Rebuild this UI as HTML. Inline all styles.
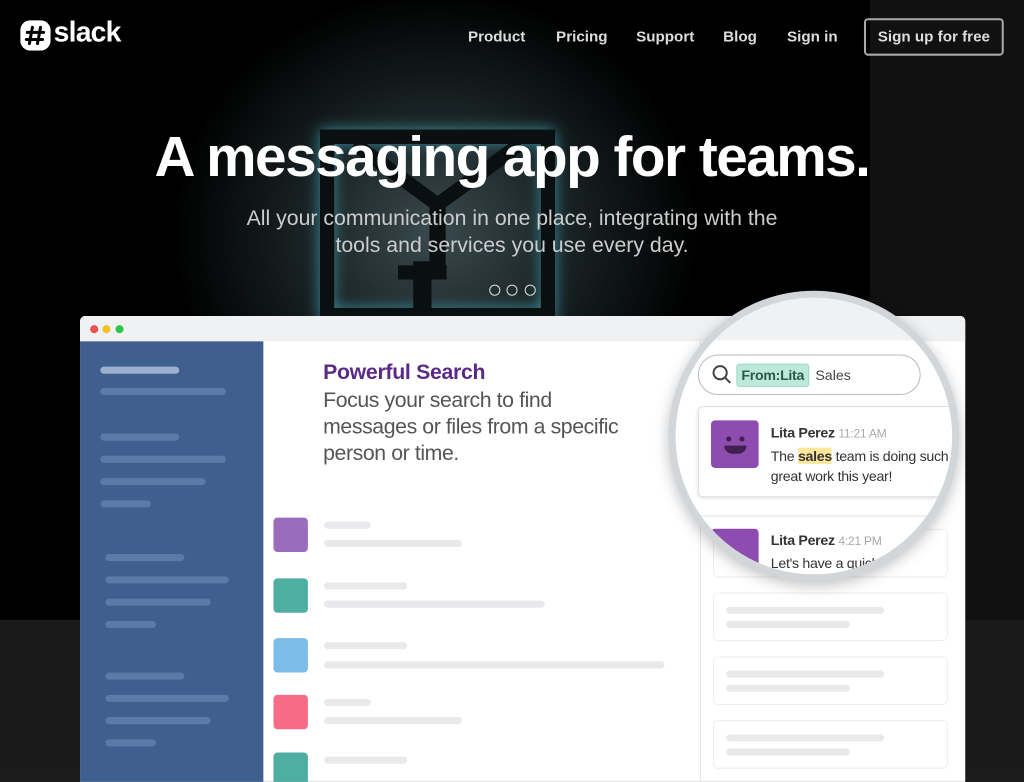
<!DOCTYPE html>
<html><head><meta charset="utf-8"><style>
*{margin:0;padding:0;box-sizing:border-box}
html,body{width:1024px;height:768px;overflow:hidden;background:#1b1b1b;font-family:"Liberation Sans",sans-serif}
#s{position:absolute;left:0;top:0;width:1011px;height:758px;transform:scale(1.01286);transform-origin:0 0}
.a{position:absolute}
.bar{position:absolute;height:7px;border-radius:4px}
.sb{background:#5a7aa8}
.gb{background:#e8e9eb}
</style></head><body><div id="s">
<div class="a" style="left:0;top:0;width:859px;height:612px;background:radial-gradient(ellipse 260px 240px at 430px 230px,#3a4a4e 0%,#1c2628 45%,#000 100%)"></div>
<div class="a" style="left:859px;top:0;width:152px;height:612px;background:#111"></div>
<div class="a" style="left:0;top:612px;width:1011px;height:146px;background:#1a1a1a"></div>
<!-- glowing logo -->
<div class="a" style="left:316px;top:128px;width:232px;height:190px;border:14px solid #0a0f10;box-shadow:0 0 14px #3a8a9a,inset 0 0 14px #3a8a9a"></div>
<svg class="a" style="left:330px;top:142px" width="204" height="130" viewBox="0 0 204 130"><path d="M20 0 L102 60 L184 0" fill="none" stroke="#0a0f10" stroke-width="14"/><path d="M102 60 V130" stroke="#0a0f10" stroke-width="16"/></svg>
<div class="a" style="left:408px;top:258px;width:18px;height:60px;background:#0a0f10"></div>
<div class="a" style="left:393px;top:262px;width:48px;height:14px;background:#0a0f10"></div>
<!-- logo -->
<svg class="a" style="left:20px;top:20px" width="30" height="30" viewBox="0 0 30 30"><rect x="0" y="0" width="30" height="30" rx="10" fill="#fff"/><g stroke="#000" stroke-width="3" stroke-linecap="round"><path d="M12 7l-3 16M20 7l-3 16M7 12h16M6 19h16"/></g></svg>
<div class="a" style="left:53px;top:16px;color:#fff;font-size:28px;font-weight:bold;letter-spacing:-0.8px">slack</div>
<div class="a" style="top:28px;left:462px;color:#ddd;font-size:15px;font-weight:bold">Product</div>
<div class="a" style="top:28px;left:549px;color:#ddd;font-size:15px;font-weight:bold">Pricing</div>
<div class="a" style="top:28px;left:628px;color:#ddd;font-size:15px;font-weight:bold">Support</div>
<div class="a" style="top:28px;left:714px;color:#ddd;font-size:15px;font-weight:bold">Blog</div>
<div class="a" style="top:28px;left:777px;color:#ddd;font-size:15px;font-weight:bold">Sign in</div>
<div class="a" style="top:18px;left:853px;width:138px;height:37px;border:2px solid #aaa;border-radius:4px;color:#ddd;font-size:15px;font-weight:bold;text-align:center;line-height:33px">Sign up for free</div>
<div class="a" style="left:0;width:1011px;top:122px;text-align:center;color:#fff;font-size:56px;font-weight:bold;letter-spacing:-1.5px">A messaging app for teams.</div>
<div class="a" style="left:0;width:1011px;top:202px;text-align:center;color:#ccc;font-size:21px;line-height:27px">All your communication in one place, integrating with the<br>tools and services you use every day.</div>
<div class="a" style="left:483px;top:281px;width:11px;height:11px;border:1.5px solid #ddd;border-radius:50%"></div>
<div class="a" style="left:500px;top:281px;width:11px;height:11px;border:1.5px solid #ddd;border-radius:50%"></div>
<div class="a" style="left:518px;top:281px;width:11px;height:11px;border:1.5px solid #ddd;border-radius:50%"></div>
<!-- window -->
<div class="a" style="left:79px;top:312px;width:874px;height:460px;background:#fff;border-radius:5px 5px 0 0;overflow:hidden">
 <div class="a" style="left:0;top:0;width:874px;height:25px;background:#f0f1f2"></div>
 <div class="a" style="left:10px;top:9px;width:8px;height:8px;border-radius:50%;background:#f0504c"></div>
 <div class="a" style="left:22px;top:9px;width:8px;height:8px;border-radius:50%;background:#f5c02a"></div>
 <div class="a" style="left:35px;top:9px;width:8px;height:8px;border-radius:50%;background:#2bc64a"></div>
 <div class="a" style="left:0;top:25px;width:181px;height:440px;background:#3f5f8f"></div>
 <div class="bar" style="left:20px;top:50px;width:78px;background:#9ab0cc"></div>
 <div class="bar sb" style="left:20px;top:71px;width:124px"></div>
 <div class="bar sb" style="left:20px;top:116px;width:78px"></div>
 <div class="bar sb" style="left:20px;top:138px;width:124px"></div>
 <div class="bar sb" style="left:20px;top:160px;width:104px"></div>
 <div class="bar sb" style="left:20px;top:182px;width:50px"></div>
 <div class="bar sb" style="left:25px;top:235px;width:78px"></div>
 <div class="bar sb" style="left:25px;top:257px;width:122px"></div>
 <div class="bar sb" style="left:25px;top:279px;width:104px"></div>
 <div class="bar sb" style="left:25px;top:301px;width:50px"></div>
 <div class="bar sb" style="left:25px;top:352px;width:78px"></div>
 <div class="bar sb" style="left:25px;top:374px;width:122px"></div>
 <div class="bar sb" style="left:25px;top:396px;width:104px"></div>
 <div class="bar sb" style="left:25px;top:418px;width:50px"></div>
 <div class="a" style="left:240px;top:44px;color:#5b2a86;font-size:21px;font-weight:bold;letter-spacing:-0.3px">Powerful Search</div>
 <div class="a" style="left:240px;top:71px;color:#555;font-size:21px;line-height:26px;letter-spacing:-0.4px">Focus your search to find<br>messages or files from a specific<br>person or time.</div>
 <div class="a" style="left:191px;top:199px;width:34px;height:34px;border-radius:4px;background:#9b6bbc"></div>
 <div class="bar gb" style="left:241px;top:203px;width:46px"></div><div class="bar gb" style="left:241px;top:221px;width:136px"></div>
 <div class="a" style="left:191px;top:259px;width:34px;height:34px;border-radius:4px;background:#4eaea2"></div>
 <div class="bar gb" style="left:241px;top:263px;width:82px"></div><div class="bar gb" style="left:241px;top:281px;width:218px"></div>
 <div class="a" style="left:191px;top:318px;width:34px;height:34px;border-radius:4px;background:#7bbde8"></div>
 <div class="bar gb" style="left:241px;top:322px;width:82px"></div><div class="bar gb" style="left:241px;top:341px;width:336px"></div>
 <div class="a" style="left:191px;top:374px;width:34px;height:34px;border-radius:4px;background:#f76b86"></div>
 <div class="bar gb" style="left:241px;top:378px;width:46px"></div><div class="bar gb" style="left:241px;top:396px;width:136px"></div>
 <div class="a" style="left:191px;top:431px;width:34px;height:34px;border-radius:4px;background:#4eaea2"></div>
 <div class="bar gb" style="left:241px;top:435px;width:82px"></div>
 <div class="a" style="left:612px;top:25px;width:1px;height:440px;background:#e5e5e5"></div>
 <div class="a" style="left:625px;top:210px;width:232px;height:48px;border:1px solid #eee;border-radius:5px"></div>
 <div class="a" style="left:625px;top:273px;width:232px;height:48px;border:1px solid #eee;border-radius:5px"></div>
 <div class="bar gb" style="left:638px;top:287px;width:156px"></div><div class="bar gb" style="left:638px;top:301px;width:122px"></div>
 <div class="a" style="left:625px;top:336px;width:232px;height:48px;border:1px solid #eee;border-radius:5px"></div>
 <div class="bar gb" style="left:638px;top:350px;width:156px"></div><div class="bar gb" style="left:638px;top:364px;width:122px"></div>
 <div class="a" style="left:625px;top:399px;width:232px;height:48px;border:1px solid #eee;border-radius:5px"></div>
 <div class="bar gb" style="left:638px;top:413px;width:156px"></div><div class="bar gb" style="left:638px;top:427px;width:122px"></div>
</div>
<!-- magnifier -->
<div class="a" style="left:660px;top:287px;width:287px;height:287px;border-radius:50%;border:7px solid #d3d6d9;background:#fff;overflow:hidden;box-shadow:0 4px 14px rgba(0,0,0,.25)">
 <div class="a" style="left:0;top:0;width:280px;height:42px;background:#f0f1f2"></div>
 <div class="a" style="left:22px;top:56px;width:220px;height:40px;border:1.5px solid #bbb;border-radius:20px"></div>
 <svg class="a" style="left:36px;top:66px" width="20" height="20" viewBox="0 0 20 20"><circle cx="8" cy="8" r="6.5" fill="none" stroke="#444" stroke-width="2"/><path d="M13 13l5 5" stroke="#444" stroke-width="2"/></svg>
 <div class="a" style="left:60px;top:65px;height:23px;padding:0 4px;background:#bde9da;border:1px solid #9ddac4;border-radius:3px;color:#2a5a4a;font-size:14px;font-weight:bold;line-height:21px;letter-spacing:-0.3px">From:Lita</div>
 <div class="a" style="left:138px;top:68px;color:#444;font-size:14px">Sales</div>
 <div class="a" style="left:22px;top:107px;width:270px;height:90px;border:1px solid #ddd;border-radius:5px;box-shadow:0 1px 3px rgba(0,0,0,.1)"></div>
 <div class="a" style="left:35px;top:121px;width:47px;height:47px;background:#8e4bb0;border-radius:4px"></div>
 <div class="a" style="left:50px;top:137px;width:5px;height:5px;border-radius:50%;background:#40204f"></div>
 <div class="a" style="left:63px;top:137px;width:5px;height:5px;border-radius:50%;background:#40204f"></div>
 <div class="a" style="left:48px;top:146px;width:22px;height:8px;border-radius:0 0 11px 11px;background:#40204f"></div>
 <div class="a" style="left:94px;top:125px;color:#333;font-size:14px;font-weight:bold;letter-spacing:-0.3px">Lita Perez <span style="font-weight:normal;color:#aaa;font-size:12px">11:21 AM</span></div>
 <div class="a" style="left:94px;top:146px;color:#333;font-size:14px;line-height:20px;white-space:nowrap;letter-spacing:-0.3px">The <span style="background:#fde79a;font-weight:bold">sales</span> team is doing such<br>great work this year!</div>
 <div class="a" style="left:22px;top:215px;width:270px;height:80px;border:1px solid #ddd;border-radius:5px"></div>
 <div class="a" style="left:35px;top:228px;width:47px;height:47px;background:#8e4bb0;border-radius:4px"></div>
 <div class="a" style="left:94px;top:231px;color:#333;font-size:14px;font-weight:bold;letter-spacing:-0.3px">Lita Perez <span style="font-weight:normal;color:#aaa;font-size:12px">4:21 PM</span></div>
 <div class="a" style="left:94px;top:254px;color:#333;font-size:14px;letter-spacing:-0.3px">Let's have a quick</div>
</div>
</div></body></html>
